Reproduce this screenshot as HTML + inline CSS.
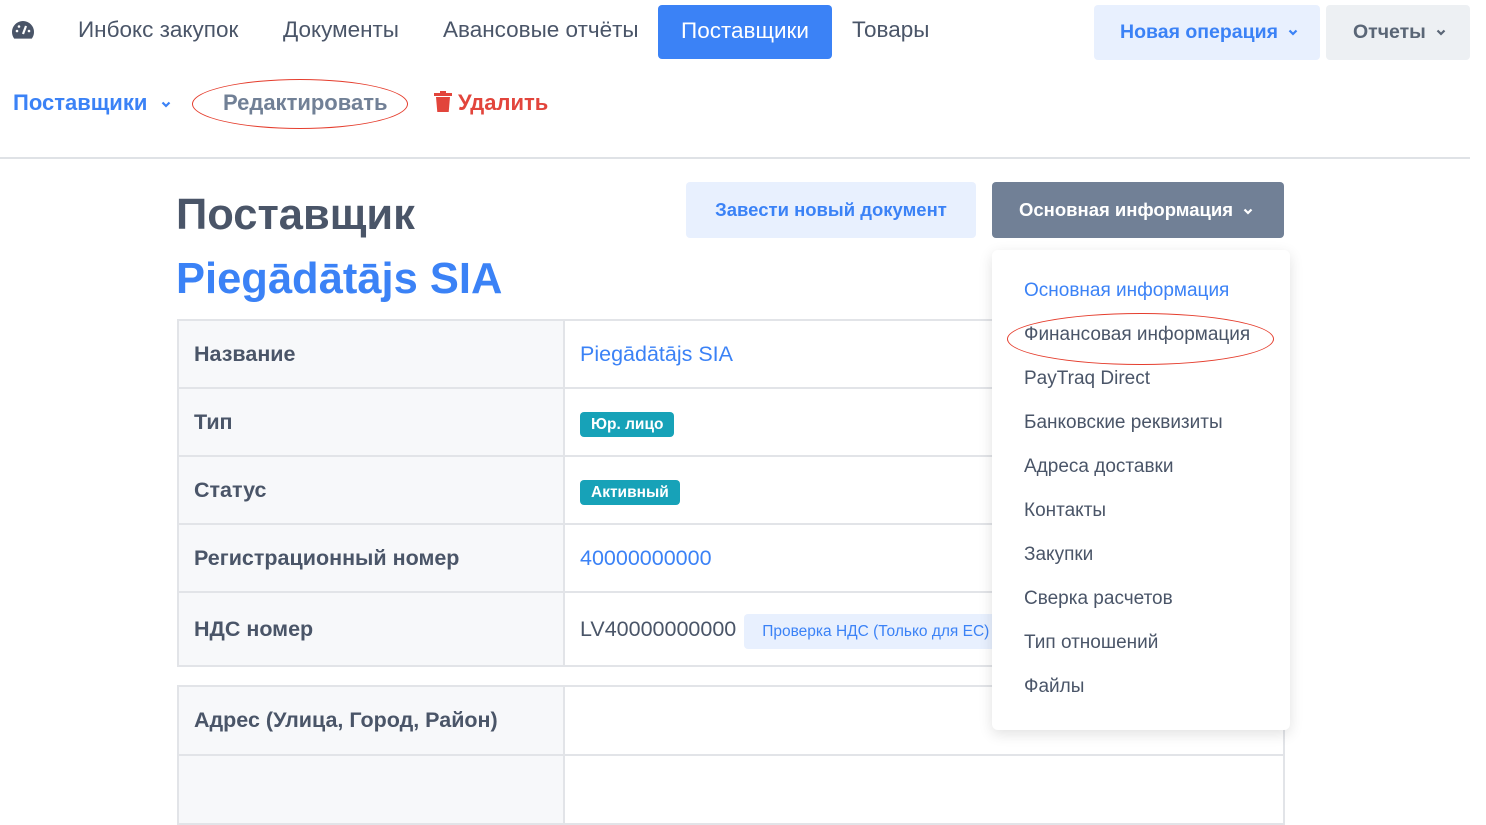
<!DOCTYPE html>
<html><head><meta charset="utf-8"><style>
*{box-sizing:border-box;margin:0;padding:0}
body{width:1486px;height:774px;overflow:hidden;background:#fff;font-family:"Liberation Sans","Noto Sans CJK SC",sans-serif;color:#4a5568;position:relative}
.a{position:absolute;white-space:nowrap}
.nav{font-size:22.5px;top:17px;color:#4a5568}
td{border:2px solid #e2e4e8;font-size:21.5px;padding:0 15px;height:68px;vertical-align:middle}
table{border-collapse:collapse;position:absolute;left:177px;width:1108px}
.b{color:#3b82f6}
.tag{background:#17a2b8;color:#fff;font-size:15.5px;font-weight:bold;padding:4px 11px;border-radius:4px}
.menu div{height:44px;line-height:44px;font-size:19px;padding-left:32px;color:#4a5568}
.menu div.b{color:#3b82f6}
.chev{display:inline-block;vertical-align:middle;margin-left:10px}
</style></head><body>
<svg class="a" style="left:11px;top:20px" width="24" height="20" viewBox="0 0 24 20"><path d="M12 1A11 11 0 0 0 1 12c0 2.5.8 4.8 2.2 6.6h17.6A11 11 0 0 0 23 12 11 11 0 0 0 12 1z" fill="#4a5568"/><path d="M12 14l3-8" stroke="#fff" stroke-width="2.2"/><circle cx="6" cy="11" r="1.3" fill="#fff"/><circle cx="8" cy="6.5" r="1.3" fill="#fff"/><circle cx="18" cy="11" r="1.3" fill="#fff"/></svg>
<div class="a nav" style="left:78px">Инбокс закупок</div>
<div class="a nav" style="left:283px">Документы</div>
<div class="a nav" style="left:443px">Авансовые отчёты</div>
<div class="a" style="left:658px;top:5px;width:174px;height:54px;background:#3b82f6;border-radius:4px;color:#fff;font-size:22.5px;line-height:52px;text-align:center">Поставщики</div>
<div class="a nav" style="left:852px">Товары</div>
<div class="a" style="left:1094px;top:5px;width:226px;height:55px;background:#e8f0fe;border-radius:4px;color:#3b82f6;font-size:19.5px;font-weight:bold;line-height:55px;padding-left:26px">Новая операция<svg class="chev" width="10" height="7" viewBox="0 0 10 7"><path d="M1.5 1.5L5 5l3.5-3.5" stroke="#3b82f6" stroke-width="2.2" fill="none"/></svg></div>
<div class="a" style="left:1326px;top:5px;width:144px;height:55px;background:#edf0f3;border-radius:4px;color:#5a6676;font-size:19.5px;font-weight:bold;line-height:55px;padding-left:27px">Отчеты<svg class="chev" width="10" height="7" viewBox="0 0 10 7"><path d="M1.5 1.5L5 5l3.5-3.5" stroke="#5a6676" stroke-width="2.2" fill="none"/></svg></div>
<div class="a b" style="left:13px;top:90px;font-size:22px;font-weight:bold">Поставщики<svg class="chev" style="margin-left:14px" width="10" height="7" viewBox="0 0 10 7"><path d="M1.5 1.5L5 5l3.5-3.5" stroke="#3b82f6" stroke-width="2.2" fill="none"/></svg></div>
<div class="a" style="left:223px;top:90px;font-size:22px;font-weight:bold;color:#718096">Редактировать</div>
<div class="a" style="left:192px;top:79px;width:216px;height:50px;border:1.5px solid #e53e2e;border-radius:50%"></div>
<svg class="a" style="left:433px;top:91px" width="20" height="22" viewBox="0 0 20 22"><rect x="1" y="2" width="18" height="3" fill="#e2453c"/><rect x="7" y="0" width="6" height="3" fill="#e2453c"/><path d="M3 6h14l-1.3 15H4.3z" fill="#e2453c"/></svg>
<div class="a" style="left:458px;top:90px;font-size:22px;font-weight:bold;color:#e2453c">Удалить</div>
<div class="a" style="left:0;top:157px;width:1470px;height:2px;background:#dfe2e6"></div>
<div class="a" style="left:176px;top:191px;font-size:43.5px;font-weight:bold;color:#4a5568">Поставщик</div>
<div class="a b" style="left:176px;top:255px;font-size:43.5px;font-weight:bold">Piegādātājs SIA</div>
<div class="a" style="left:686px;top:182px;width:290px;height:56px;background:#e8f0fe;border-radius:4px;color:#3b82f6;font-size:18.5px;font-weight:bold;line-height:56px;text-align:center">Завести новый документ</div>
<div class="a" style="left:992px;top:182px;width:292px;height:56px;background:#718096;border-radius:4px;color:#fff;font-size:18.5px;font-weight:bold;line-height:56px;padding-left:27px">Основная информация<svg class="chev" width="10" height="7" viewBox="0 0 10 7"><path d="M1.5 1.5L5 5l3.5-3.5" stroke="#fff" stroke-width="2.2" fill="none"/></svg></div>
<table style="top:319px">
<tr><td style="width:386px;background:#f7f8fa;font-weight:bold;height:68px">Название</td><td class="b">Piegādātājs SIA</td></tr>
<tr><td style="background:#f7f8fa;font-weight:bold">Тип</td><td><span class="tag">Юр. лицо</span></td></tr>
<tr><td style="background:#f7f8fa;font-weight:bold">Статус</td><td><span class="tag">Активный</span></td></tr>
<tr><td style="background:#f7f8fa;font-weight:bold">Регистрационный номер</td><td class="b">40000000000</td></tr>
<tr><td style="background:#f7f8fa;font-weight:bold;height:74px">НДС номер</td><td>LV40000000000 <span style="background:#e8f0fe;color:#3b82f6;font-size:15.5px;padding:9px 18px;border-radius:4px;margin-left:2px">Проверка НДС (Только для ЕС)</span></td></tr>
</table>
<table style="top:685px">
<tr><td style="width:386px;background:#f7f8fa;font-weight:bold;height:69px">Адрес (Улица, Город, Район)</td><td></td></tr>
<tr><td style="background:#f7f8fa;height:69px"></td><td></td></tr>
</table>
<div class="a menu" style="left:992px;top:250px;width:298px;height:480px;background:#fff;border-radius:6px;box-shadow:0 4px 14px rgba(0,0,0,.12);padding-top:19px">
<div class="b">Основная информация</div><div>Финансовая информация</div><div>PayTraq Direct</div><div>Банковские реквизиты</div><div>Адреса доставки</div><div>Контакты</div><div>Закупки</div><div>Сверка расчетов</div><div>Тип отношений</div><div>Файлы</div>
</div>
<div class="a" style="left:1007px;top:313px;width:267px;height:52px;border:1.5px solid #e53e2e;border-radius:50%"></div>
</body></html>
